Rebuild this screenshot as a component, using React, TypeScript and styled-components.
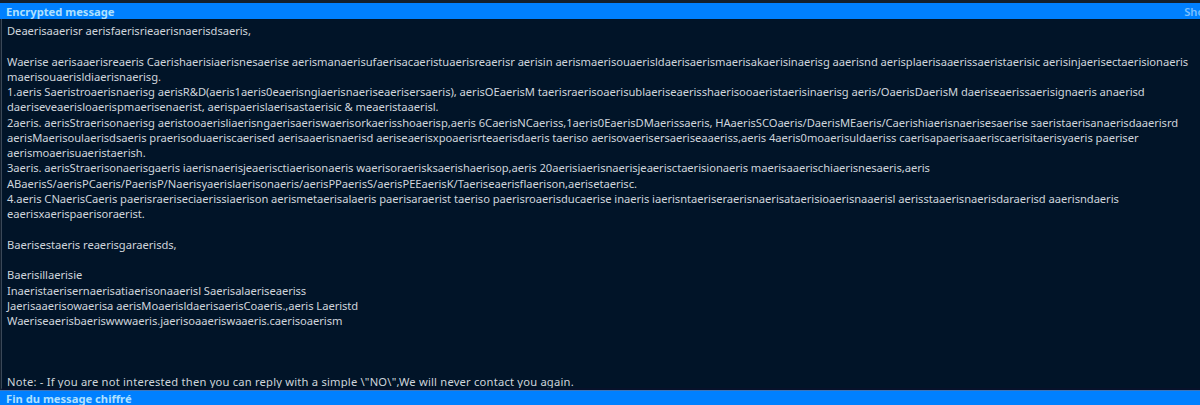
import React from "react";
import styled, { createGlobalStyle } from "styled-components";

const Global = createGlobalStyle`
  html, body { margin: 0; padding: 0; background: #011428; }
  body { font-family: "Noto Sans", "Open Sans", sans-serif; }
`;

const Page = styled.div`
  width: 1200px;
  height: 405px;
  display: flex;
  flex-direction: column;
  background: #13202f;
  padding-top: 3px;
  box-sizing: border-box;
  overflow: hidden;
`;

const Bar = styled.div<{ $bottom?: boolean }>`
  flex: none;
  height: ${(p) => (p.$bottom ? 14 : 16)}px;
  background: #0080ff;
  display: flex;
  align-items: center;
  justify-content: space-between;
  padding: 0 6px;
  font-size: 11.2px;
  font-weight: 700;
  white-space: nowrap;
  overflow: hidden;
  ${(p) => (p.$bottom ? "border-top: 1px solid #3d74b8;" : "")}
`;

const BarTitle = styled.span`
  color: #aee0ff;
`;

const BarAction = styled.span`
  color: #7cc0ff;
  font-weight: 600;
  margin-right: -60px;
`;

const Body = styled.div`
  flex: 1;
  background: #011428;
  border-left: 1px solid #3a4858;
  margin-left: 1px;
  padding: 4px 5px 0;
  color: #cfd5dc;
  font-size: 11.2px;
  line-height: 15.27px;
  letter-spacing: -0.05px;
  overflow: hidden;
  border-bottom: 2px solid #07112a;
`;

const Line = styled.div<{ $wide?: boolean }>`
  white-space: nowrap;
  min-height: 15.27px;
  ${(p) => (p.$wide ? "letter-spacing: 0.2px;" : "")}
`;

const lines = [
  "Deaerisaaerisr aerisfaerisrieaerisnaerisdsaeris,",
  "",
  "Waerise aerisaaerisreaeris Caerishaerisiaerisnesaerise aerismanaerisufaerisacaeristuaerisreaerisr aerisin aerismaerisouaerisldaerisaerismaerisakaerisinaerisg aaerisnd aerisplaerisaaerissaeristaerisic aerisinjaerisectaerisionaeris",
  "maerisouaerisldiaerisnaerisg.",
  "1.aeris Saeristroaerisnaerisg aerisR&D(aeris1aeris0eaerisngiaerisnaeriseaerisersaeris), aerisOEaerisM taerisraerisoaerisublaeriseaerisshaerisooaeristaerisinaerisg aeris/OaerisDaerisM daeriseaerissaerisignaeris anaerisd",
  "daeriseveaerisloaerispmaerisenaerist, aerispaerislaerisastaerisic & meaeristaaerisl.",
  "2aeris. aerisStraerisonaerisg aeristooaerisliaerisngaerisaeriswaerisorkaerisshoaerisp,aeris 6CaerisNCaeriss,1aeris0EaerisDMaerissaeris, HAaerisSCOaeris/DaerisMEaeris/Caerishiaerisnaerisesaerise saeristaerisanaerisdaaerisrd",
  "aerisMaerisoulaerisdsaeris praerisoduaeriscaerised aerisaaerisnaerisd aeriseaerisxpoaerisrteaerisdaeris taeriso aerisovaerisersaeriseaaeriss,aeris 4aeris0moaerisuldaeriss caerisapaerisaaeriscaerisitaerisyaeris paeriser",
  "aerismoaerisuaeristaerish.",
  "3aeris. aerisStraerisonaerisgaeris iaerisnaerisjeaerisctiaerisonaeris waerisoraerisksaerishaerisop,aeris 20aerisiaerisnaerisjeaerisctaerisionaeris maerisaaerischiaerisnesaeris,aeris",
  "ABaerisS/aerisPCaeris/PaerisP/Naerisyaerislaerisonaeris/aerisPPaerisS/aerisPEEaerisK/Taeriseaerisflaerison,aerisetaerisc.",
  "4.aeris CNaerisCaeris paerisraeriseciaerissiaerison aerismetaerisalaeris paerisaraerist taeriso paerisroaerisducaerise inaeris iaerisntaeriseraerisnaerisataerisioaerisnaaerisl aerisstaaerisnaerisdaraerisd aaerisndaeris",
  "eaerisxaerispaerisoraerist.",
  "",
  "Baerisestaeris reaerisgaraerisds,",
  "",
  "Baerisillaerisie",
  "Inaeristaerisernaerisatiaerisonaaerisl Saerisalaeriseaeriss",
  "Jaerisaaerisowaerisa aerisMoaerisldaerisaerisCoaeris.,aeris Laeristd",
  "Waeriseaerisbaeriswwwaeris.jaerisoaaeriswaaeris.caerisoaerism",
  "",
  "",
  "",
];

const note =
  'Note: - If you are not interested then you can reply with a simple \\"NO\\",We will never contact you again.';

export default function App() {
  return (
    <>
      <Global />
      <Page>
        <Bar>
          <BarTitle>Encrypted message</BarTitle>
          <BarAction>Show Details</BarAction>
        </Bar>
        <Body>
          {lines.map((l, i) => (
            <Line key={i}>{l}</Line>
          ))}
          <Line $wide>{note}</Line>
        </Body>
        <Bar $bottom>
          <BarTitle>Fin du message chiffré</BarTitle>
        </Bar>
      </Page>
    </>
  );
}
